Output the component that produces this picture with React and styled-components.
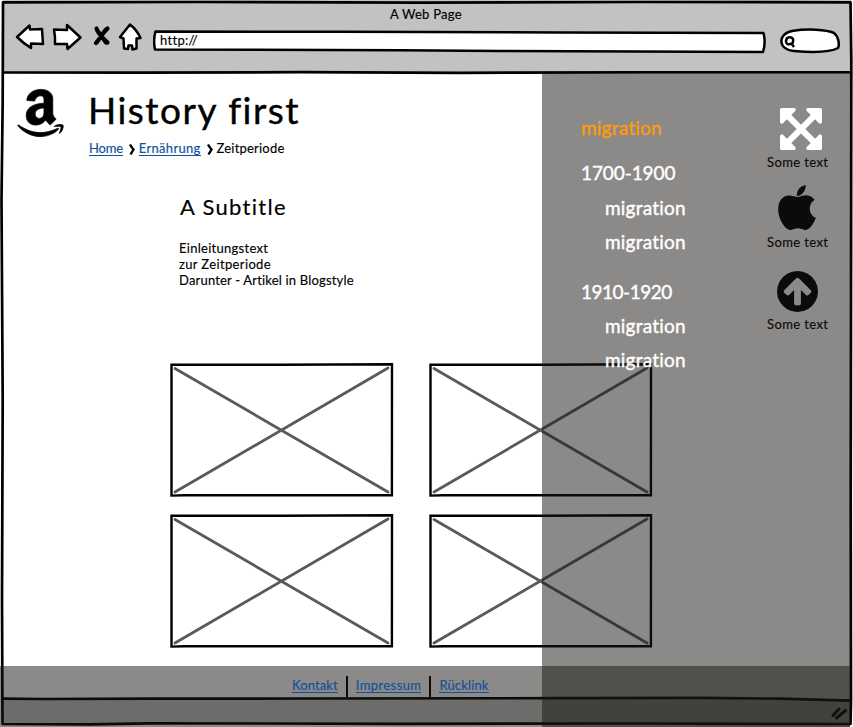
import React from "react";
import styled, { createGlobalStyle } from "styled-components";
import { FaAmazon } from "react-icons/fa";

const GlobalStyle = createGlobalStyle`
  * { box-sizing: border-box; }
  body { margin: 0; background: #fff; overflow: hidden; }
  h1, h2, p, ul { margin: 0; padding: 0; font-weight: 400; }
  ul { list-style: none; }
`;

const shade = "rgba(24, 22, 18, 0.5)";

const Window = styled.div`
  position: relative;
  width: 853px;
  height: 727px;
  display: flex;
  flex-direction: column;
  font-family: Lato, "Open Sans", sans-serif;
  font-size: 13px;
  line-height: 16px;
  color: #000;
  background: #fff;
  white-space: nowrap;
`;

const Text = styled.span`
  letter-spacing: ${(p) => p.$track || 0}px;
  -webkit-text-stroke: ${(p) => p.$stroke || 0.15}px currentColor;
`;

const Frame = styled.svg`
  position: absolute;
  inset: 0;
  pointer-events: none;
`;

const Chrome = styled.header`
  height: 73px;
  margin: 0 2px 0 3px;
  background: #c2c2c2;
  display: flex;
  flex-direction: column;
`;

const ChromeTitle = styled.div`
  height: 22px;
  padding: 6px 0 0 387px;
`;

const Toolbar = styled.div`
  display: flex;
  height: 34px;
  margin-left: 11px;
`;

const ToolIcon = styled.svg`
  width: ${(p) => p.$w}px;
  height: 32px;
  margin-right: ${(p) => p.$gap || 0}px;
  flex: none;
  fill: ${(p) => p.$fill || "#fff"};
  stroke: #000;
  stroke-width: 2.5;
  stroke-linejoin: round;
  stroke-linecap: round;
`;

const Field = styled.div`
  position: relative;
  width: ${(p) => p.$w}px;
  height: 32px;
  flex: none;
  margin-right: ${(p) => p.$gap || 0}px;
  padding: 10px 0 0 7px;
`;

const FieldShape = styled.svg`
  position: absolute;
  inset: 0;
  width: 100%;
  height: 100%;
  fill: #fff;
  stroke: #000;
  stroke-width: 2.5;
  stroke-linejoin: round;
`;

const FieldText = styled(Text)`
  position: relative;
`;

const Main = styled.main`
  height: 593px;
  padding: 14px 0 0 17px;
`;

const Heading = styled.div`
  display: flex;
  height: 105px;
`;

const Logo = styled(FaAmazon)`
  width: 47px;
  height: 54px;
  margin: -1px 24px 0 0;
  flex: none;
  stroke: #000;
  stroke-width: 7;
  overflow: visible;
`;

const Title = styled.h1`
  font-size: 37px;
  line-height: 46px;
`;

const Breadcrumbs = styled.nav`
  display: flex;
  margin-top: 7px;
  margin-left: 1px;
`;

const Link = styled.a`
  color: #10509c;
  height: 16px;
  border-bottom: 1px solid #10509c;
`;

const Chevron = styled.svg`
  width: 6px;
  height: 11px;
  margin: 4px ${(p) => p.$right}px 0 6px;
  fill: none;
  stroke: #000;
  stroke-width: 2.4;
  overflow: visible;
`;

const Intro = styled.section`
  height: 171px;
  padding-left: 162px;
`;

const Subtitle = styled.h2`
  font-size: 22px;
  line-height: 28px;
  padding: 1px 0 0 1px;
  margin-bottom: 19px;
`;

const Gallery = styled.section`
  display: grid;
  grid-template-columns: 223px 223px;
  gap: 18px 36px;
  margin-left: 153px;
`;

const Placeholder = styled.svg`
  width: 223px;
  height: 133px;
  fill: none;
  overflow: visible;
`;

const Footer = styled.footer`
  position: relative;
  width: 850px;
  height: 61px;
  background: ${shade};
`;

const FooterLinks = styled.nav`
  display: flex;
  padding-left: 292px;
  height: 32px;
`;

const FooterLink = styled(Link)`
  margin-top: 11px;
`;

const Divider = styled.span`
  width: 2px;
  height: 21px;
  margin: 10px 8px 0;
  background: #0c0b09;
`;

const Drawer = styled.aside`
  position: absolute;
  left: 542px;
  top: 74px;
  width: 308px;
  height: 653px;
  background: ${shade};
  display: flex;
  justify-content: space-between;
`;

const Menu = styled.ul`
  color: #fff;
  font-size: 19px;
  line-height: 24px;
  padding: 42px 0 0 39px;
`;

const MenuItem = styled.li`
  height: 24px;
  margin-top: ${(p) => p.$top || 0}px;
  padding-left: ${(p) => (p.$nested ? 24 : 0)}px;
  color: ${(p) => (p.$active ? "#ff9a0c" : "#fff")};
`;

const Actions = styled.div`
  display: flex;
  flex-direction: column;
  width: 83px;
  padding-top: 34px;
`;

const Action = styled.div`
  height: ${(p) => p.$h}px;
  display: flex;
  flex-direction: column;
  color: #0c0b09;
`;

const Glyph = styled.svg`
  width: ${(p) => p.$w}px;
  height: ${(p) => p.$h}px;
  margin: 0 0 ${(p) => p.$below}px ${(p) => p.$left}px;
  fill: ${(p) => p.$color || "#0c0b09"};
`;

function Photo() {
  return (
    <Placeholder viewBox="0 0 223 133">
      <g stroke="#5a5a5a" strokeWidth="2.8" strokeLinecap="round">
        <path d="M5 5.500L218 129M218 5L5 129" />
      </g>
      <path d="M1.500 1.700L110 1.800L222 1.200L221.900 132.300L14 132.300L1.500 132.600Z" stroke="#000" strokeWidth="2.400" />
    </Placeholder>
  );
}

function WindowFrame() {
  return (
    <Frame width="853" height="727" viewBox="0 0 853 727" fill="none" stroke="#000" strokeWidth="2.7">
      <path d="M3 699L44 698.700L150 699L300 698L560 698L700 698L780 698.500L850 700.700V724H3Z" fill="#c2c2c2" stroke="none" />
      <path d="M3 2.300L200 2L420 2.600L640 2L850.500 2.300L851.300 60L851 300L850.700 500L851 700L850.500 724L640 723.500L400 723.800L150 723.300L90 724.300L2.500 724L2 600L2.700 400L1.500 200L2.700 100Z" strokeLinejoin="round" />
      <path d="M3 72.500L140 72.700L300 72.200L460 72.800L640 72.300L850 72.300" />
      <path d="M3 698.600L44 699L150 698.700L300 698.500L560 698.200L700 697.800L780 698.700L850 700.700" />
      <path d="M833 715.500L839 709M836.500 718L845.500 710.500" strokeWidth="3" strokeLinecap="round" />
    </Frame>
  );
}

const menu = [
  { label: "migration", active: true, track: 0.2 },
  { label: "1700-1900", top: 21, track: -0.1 },
  { label: "migration", top: 11, nested: true, track: 0.2 },
  { label: "migration", top: 10, nested: true, track: 0.2 },
  { label: "1910-1920", top: 26, track: -0.5 },
  { label: "migration", top: 10, nested: true, track: 0.2 },
  { label: "migration", top: 10, nested: true, track: 0.2 },
];

export default function App() {
  return (
    <>
      <GlobalStyle />
      <Window>
        <Chrome>
          <ChromeTitle><Text $track={0.25}>A Web Page</Text></ChromeTitle>
          <Toolbar>
            <ToolIcon $w={32} $gap={5} viewBox="14 22 32 32">
              <path d="M17 37L29.500 25.500L30 29.500L42 29L43 44L31 43.500L31 48Q23 43 17 37Z" />
            </ToolIcon>
            <ToolIcon $w={32} $gap={9} viewBox="51 22 32 32">
              <path d="M54 29.500L67 30L67 25L80.500 37.500L67.500 49L67 44L55 44Q55.500 38 54 29.500Z" />
            </ToolIcon>
            <ToolIcon $w={20} $gap={6} viewBox="92 22 20 32" $fill="none">
              <path d="M96.500 28.500C98 34 104 39 107.500 42.500M107.500 28.500C103 32 100 39 96 43M97 30L106 42.500M105.500 30L97 42" strokeWidth="4.200" />
            </ToolIcon>
            <ToolIcon $w={24} $gap={11} viewBox="118 22 24 32">
              <path d="M130 24.500L120 37L123.500 38.500L124 48.500L128 49L128.500 45.500H132L132.500 49.500L136.500 48.500V38.500L140.500 38Q137 30 130 24.500Z" />
            </ToolIcon>
            <Field $w={613} $gap={13}>
              <FieldShape viewBox="153 22 613 32">
                <path d="M155.500 31.500L340 31.800L560 32.500L763.500 33Q766 42 763 52L500 51L400 50.300L155 49.500Q153 40 155.500 31.500Z" />
              </FieldShape>
              <FieldText $track={0.3}>http://</FieldText>
            </Field>
            <Field $w={63}>
              <FieldShape viewBox="779 22 63 32">
                <path d="M792 31C808 28.500 826 29.500 834 33C838 36 840 44 838 48C830 52.500 812 52.500 794 51C778 50 777 34 792 31Z" />
                <path d="M787 38Q791 36 793 39Q794 44 790 44Q786 45 786 41ZM791 43L794 47" />
              </FieldShape>
            </Field>
          </Toolbar>
        </Chrome>

        <Main>
          <Heading>
            <Logo viewBox="0 0 448 512" preserveAspectRatio="none" />
            <div>
              <Title><Text $track={1.5} $stroke={0.4}>History first</Text></Title>
              <Breadcrumbs>
                <Link><Text $track={-0.2}>Home</Text></Link>
                <Chevron $right={4} viewBox="0 0 6 11"><path d="M1 0.500Q3 4 4.500 5.500L1.500 10.500" /></Chevron>
                <Link><Text $track={0.3}>Ernährung</Text></Link>
                <Chevron $right={4} viewBox="0 0 6 11"><path d="M1 0.500Q3 4 4.500 5.500L1.500 10.500" /></Chevron>
                <Text $track={0.2}>Zeitperiode</Text>
              </Breadcrumbs>
            </div>
          </Heading>
          <Intro>
            <Subtitle><Text $track={1.3}>A Subtitle</Text></Subtitle>
            <p><Text $track={0.28}>Einleitungstext</Text></p>
            <p><Text $track={0.36}>zur Zeitperiode</Text></p>
            <p><Text $track={0.18}>Darunter - Artikel in Blogstyle</Text></p>
          </Intro>
          <Gallery>
            <Photo /><Photo /><Photo /><Photo />
          </Gallery>
        </Main>

        <WindowFrame />

        <Footer>
          <FooterLinks>
            <FooterLink><Text $track={0.1}>Kontakt</Text></FooterLink>
            <Divider />
            <FooterLink><Text $track={0.4}>Impressum</Text></FooterLink>
            <Divider />
            <FooterLink><Text $track={0.15}>Rücklink</Text></FooterLink>
          </FooterLinks>
        </Footer>

        <Drawer>
          <Menu>
            {menu.map((m, i) => (
              <MenuItem key={i} $top={m.top} $nested={m.nested} $active={m.active}>
                <Text $track={m.track} $stroke={0.4}>{m.label}</Text>
              </MenuItem>
            ))}
          </Menu>
          <Actions>
            <Action $h={77}>
              <Glyph $w={42} $h={42} $left={13} $below={4} $color="#fff" viewBox="0 -1408 1536 1536">
                <path transform="scale(1,-1)" d="M1283 995l-355 -355l355 -355l144 144q29 31 70 14q39 -17 39 -59v-448q0 -26 -19 -45t-45 -19h-448q-42 0 -59 40q-17 39 14 69l144 144l-355 355l-355 -355l144 -144q31 -30 14 -69q-17 -40 -59 -40h-448q-26 0 -45 19t-19 45v448q0 42 40 59q39 17 69 -14l144 -144l355 355l-355 355l-144 -144q-19 -19 -45 -19q-12 0 -24 5q-40 17 -40 59v448q0 26 19 45t45 19h448q42 0 59 -40q17 -39 -14 -69l-144 -144l355 -355l355 355l-144 144q-31 30 -14 69q17 40 59 40h448q26 0 45 -19t19 -45v-448q0 -42 -39 -59q-13 -5 -25 -5q-26 0 -45 19z" />
              </Glyph>
              <Text $track={0.4}>Some text</Text>
            </Action>
            <Action $h={86}>
              <Glyph $w={38} $h={45} $left={11} $below={4} viewBox="0 -1536 1393 1664">
                <path transform="scale(1,-1)" d="M1393 321q-39 -125 -123 -250q-129 -196 -257 -196q-49 0 -140 32q-86 32 -151 32q-61 0 -142 -33q-81 -34 -132 -34q-152 0 -301 259q-147 261 -147 503q0 228 113 374q113 144 284 144q72 0 177 -30q104 -30 138 -30q45 0 143 34q102 34 173 34q119 0 213 -65q52 -36 104 -100q-79 -67 -114 -118q-65 -94 -65 -207q0 -124 69 -223t158 -126zM1017 1494q0 -61 -29 -136q-30 -75 -93 -138q-54 -54 -108 -72q-37 -11 -104 -17q3 149 78 257q74 107 250 148q1 -3 2.500 -11t2.500 -11q0 -4 0.500 -10t0.500 -10z" />
              </Glyph>
              <Text $track={0.4}>Some text</Text>
            </Action>
            <Action $h={80}>
              <Glyph $w={41} $h={41} $left={10} $below={4} viewBox="0 -1408 1536 1536">
                <path transform="scale(1,-1)" d="M1284 641q0 27 -18 45l-362 362l-91 91q-18 18 -45 18t-45 -18l-91 -91l-362 -362q-18 -18 -18 -45t18 -45l91 -91q18 -18 45 -18t45 18l189 189v-502q0 -26 19 -45t45 -19h128q26 0 45 19t19 45v502l189 -189q19 -19 45 -19t45 19l91 91q18 18 18 45zM1536 640q0 -209 -103 -385.500t-279.500 -279.500t-385.500 -103t-385.500 103t-279.500 279.500t-103 385.500t103 385.500t279.500 279.500t385.500 103t385.500 -103t279.500 -279.500t103 -385.500z" />
              </Glyph>
              <Text $track={0.4}>Some text</Text>
            </Action>
          </Actions>
        </Drawer>
      </Window>
    </>
  );
}
